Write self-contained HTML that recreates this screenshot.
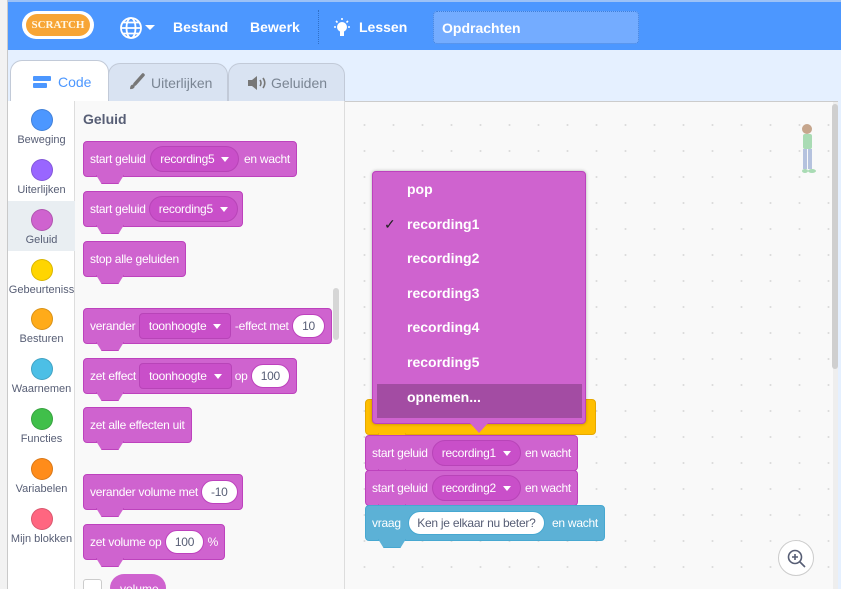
<!DOCTYPE html>
<html><head><meta charset="utf-8"><style>
*{box-sizing:border-box;margin:0;padding:0}
html,body{width:841px;height:589px;overflow:hidden}
body{position:relative;font-family:"Liberation Sans",sans-serif;background:#e5f0ff}
.abs{position:absolute}
#strip{left:0;top:0;width:8px;height:589px;background:#f2f2f2;border-right:1px solid #c9c9c9}
#hdr{left:8px;top:0;width:833px;height:50px;background:#4c97ff;border-top:2px solid #9cc2f7}
.nav{position:absolute;top:17px;color:#fff;font-weight:bold;font-size:14px}
.tab{position:absolute;top:63px;height:38px;border:1px solid #c2cad8;border-bottom:none;border-radius:12px 12px 0 0;background:#d9e3f2;color:#7a8593;font-size:14px;padding-top:11px}
#cats{left:8px;top:101px;width:67px;height:488px;background:#fff;border-right:1px solid #ddd}
.cat{position:absolute;left:0;width:67px;text-align:center;font-size:11px;color:#575e75;white-space:nowrap;overflow:hidden}
.cat i{display:block;width:22px;height:22px;border-radius:50%;margin:0 auto 3px;border:1px solid rgba(0,0,0,.15)}
#pal{left:75px;top:101px;width:270px;height:488px;background:#f9f9f9;border-right:1px solid #ddd}
#ws{left:345px;top:101px;width:493px;height:488px;background:#f9f9f9;background-image:radial-gradient(#dcdcdc 1px,transparent 1.2px);background-size:29px 26px;background-position:5px 10px;border-top:1px solid #ccc;overflow:hidden}
.blk{position:absolute;height:36px;background:#cf63cf;border:1px solid #bd42bd;border-radius:4px;display:flex;align-items:center;justify-content:space-between;padding:0 6px;color:#fff;font-size:12px;letter-spacing:-0.25px;white-space:nowrap;gap:3px}
.blk:after{content:"";position:absolute;left:12px;bottom:-8px;width:26px;height:8px;background:inherit;border:1px solid;border-color:inherit;border-top:none;border-radius:0 0 4px 4px;clip-path:polygon(0 0,100% 0,80% 100%,20% 100%)}
.dd{background:#c94fc9;border-radius:14px;height:26px;padding:0 9px;display:flex;align-items:center;border:1px solid #b844b8}
.dd:after{content:"";border:4px solid transparent;border-top:5px solid #fff;margin:5px 0 0 7px}
.sq{border-radius:4px}
.num{background:#fff;color:#575e75;border-radius:13px;height:24px;padding:0 9px;display:flex;align-items:center;border:1px solid #bd42bd}
.menu{left:372px;top:171px;width:214px;height:253px;background:#cf63cf;border:1px solid #bd42bd;border-radius:4px;box-shadow:0 0 3px rgba(0,0,0,.3)}
.mi{position:absolute;left:34px;color:#fff;font-weight:bold;font-size:14px}
</style></head><body>
<div id="strip" class="abs"></div>
<div id="hdr" class="abs">
 <div class="abs" style="left:14px;top:9px;width:72px;height:28px;background:#fff;border-radius:14px"></div>
 <div class="abs" style="left:18px;top:12px;width:64px;height:22px;background:#f7a535;border-radius:11px;color:#fff8e8;font-weight:bold;font-size:11px;text-align:center;line-height:22px;font-family:'Liberation Serif',serif">SCRATCH</div>
 <svg class="abs" style="left:111px;top:14px" width="24" height="24" viewBox="0 0 24 24" fill="none" stroke="#fff" stroke-width="1.8"><circle cx="12" cy="12" r="10"/><ellipse cx="12" cy="12" rx="4.5" ry="10"/><path d="M2 12h20M4 6.5h16M4 17.5h16"/></svg>
 <div class="abs" style="left:137px;top:23px;border:5px solid transparent;border-top:5px solid #fff"></div>
 <div class="nav" style="left:165px">Bestand</div>
 <div class="nav" style="left:242px">Bewerk</div>
 <div class="abs" style="left:310px;top:8px;height:34px;border-left:1px dotted #2f6fc7"></div>
 <svg class="abs" style="left:324px;top:15px" width="20" height="22" viewBox="0 0 20 22"><circle cx="10" cy="10" r="5" fill="#fff"/><rect x="8" y="14" width="4" height="5" fill="#fff"/><path d="M10 1v2M2 10h2M16 10h2M4 4l1.5 1.5M16 4l-1.5 1.5" stroke="#fff" stroke-width="1.6"/></svg>
 <div class="nav" style="left:351px">Lessen</div>
 <div class="abs" style="left:425px;top:9px;width:206px;height:33px;background:#74acff;border:1px dotted #3d7fdc;border-radius:4px;color:#fff;font-weight:bold;font-size:14px;padding:8px 8px">Opdrachten</div>
</div>
<div class="tab" style="left:228px;width:117px;padding-left:42px">Geluiden</div>
<svg class="abs" style="left:247px;top:75px" width="20" height="16"><path d="M1 5h4l5-4v14l-5-4H1z" fill="#777"/><path d="M13 5q2 3 0 6M16 3q3.5 5 0 10" stroke="#777" stroke-width="1.6" fill="none"/></svg>
<div class="tab" style="left:108px;width:120px;padding-left:42px">Uiterlijken</div>
<svg class="abs" style="left:127px;top:73px" width="18" height="18"><path d="M16 2L8 11" stroke="#777" stroke-width="3.5" stroke-linecap="round"/><path d="M3 16q0-5 4-4.5q1.5 1.5 0 3.5q-2 1.5-4 1" fill="#777"/></svg>
<div class="tab" style="left:10px;width:99px;background:#fff;color:#4c97ff;top:60px;height:42px;border-color:#c2cad8;padding-top:13px;padding-left:47px">Code</div>
<svg class="abs" style="left:33px;top:76px" width="18" height="12"><rect x="0" y="0" width="18" height="5" rx="1" fill="#4c97ff"/><rect x="0" y="7" width="14" height="5" rx="1" fill="#4c97ff"/></svg>

<div id="cats" class="abs">
 <div class="abs" style="left:0;top:100px;width:67px;height:50px;background:#e9eef2"></div>
 <div class="cat" style="top:8px"><i style="background:#4c97ff"></i>Beweging</div>
 <div class="cat" style="top:58px"><i style="background:#9966ff"></i>Uiterlijken</div>
 <div class="cat" style="top:108px"><i style="background:#cf63cf"></i>Geluid</div>
 <div class="cat" style="top:158px"><i style="background:#ffd500"></i>Gebeurteniss</div>
 <div class="cat" style="top:207px"><i style="background:#ffab19"></i>Besturen</div>
 <div class="cat" style="top:257px"><i style="background:#4cbfe6"></i>Waarnemen</div>
 <div class="cat" style="top:307px"><i style="background:#40bf4a"></i>Functies</div>
 <div class="cat" style="top:357px"><i style="background:#ff8c1a"></i>Variabelen</div>
 <div class="cat" style="top:407px"><i style="background:#ff6680"></i>Mijn blokken</div>
</div>
<div id="pal" class="abs">
 <div class="abs" style="left:8px;top:10px;font-weight:bold;font-size:14px;color:#575e75">Geluid</div>
 <div class="abs" style="left:258px;top:187px;width:6px;height:52px;background:#d6d6d6;border-radius:3px"></div>
</div>
<div class="blk" style="left:83px;top:141px;width:214px">start geluid <span class="dd">recording5</span> en wacht</div>
<div class="blk" style="left:83px;top:191px;width:160px">start geluid <span class="dd">recording5</span></div>
<div class="blk" style="left:83px;top:241px;width:103px">stop alle geluiden</div>
<div class="blk" style="left:83px;top:308px;width:249px">verander <span class="dd sq">toonhoogte</span> -effect met <span class="num">10</span></div>
<div class="blk" style="left:83px;top:358px;width:214px">zet effect <span class="dd sq">toonhoogte</span> op <span class="num">100</span></div>
<div class="blk" style="left:83px;top:407px;width:109px">zet alle effecten uit</div>
<div class="blk" style="left:83px;top:474px;width:160px">verander volume met <span class="num">-10</span></div>
<div class="blk" style="left:83px;top:524px;width:142px">zet volume op <span class="num">100</span> %</div>
<div class="abs" style="left:83px;top:579px;width:19px;height:19px;background:#fff;border:1px solid #ccc;border-radius:3px"></div>
<div class="abs" style="left:110px;top:574px;width:56px;height:28px;background:#cf63cf;border-radius:14px;color:#fff;font-size:12px;padding:8px 10px">volume</div>

<div id="ws" class="abs">
 <div class="abs" style="left:488px;top:0;width:5px;height:488px;background:#eee"></div>
 <div class="abs" style="left:487px;top:2px;width:6px;height:265px;background:#cfcfcf;border-radius:3px"></div>
 <svg class="abs" style="left:453px;top:20px" width="20" height="52" opacity=".75"><circle cx="9" cy="7" r="5" fill="#b58b6a"/><rect x="5" y="12" width="9" height="15" rx="2" fill="#8fd19e"/><path d="M7 27v20M12 27v20" stroke="#9fb0d5" stroke-width="4"/><ellipse cx="7" cy="49" rx="3" ry="2" fill="#8fd19e"/><ellipse cx="14" cy="49" rx="4" ry="2" fill="#8fd19e"/></svg>
 <div class="abs" style="left:433px;top:438px;width:36px;height:36px;border-radius:50%;background:#fff;border:1px solid #ccc"></div>
 <svg class="abs" style="left:441px;top:446px" width="22" height="22" fill="none" stroke="#575e75" stroke-width="1.6"><circle cx="9" cy="9" r="6.5"/><path d="M14 14l5 5M9 6v6M6 9h6"/></svg>
</div>
<div class="blk" style="left:365px;top:399px;width:231px;background:#ffbf00;border-color:#e6a800"></div>
<div class="blk" style="left:365px;top:435px;width:213px">start geluid <span class="dd">recording1</span> en wacht</div>
<div class="blk" style="left:365px;top:470px;width:213px">start geluid <span class="dd">recording2</span> en wacht</div>
<div class="blk" style="left:365px;top:505px;width:240px;background:#5cb1d6;border-color:#47a8d1">vraag <span class="num" style="border-color:#47a8d1;padding:0 8px">Ken je elkaar nu beter?</span> en wacht</div>

<div class="abs menu">
 <div class="mi" style="top:9px">pop</div>
 <div class="mi" style="top:44px;left:11px;color:#222;font-weight:normal">&#10003;</div>
 <div class="mi" style="top:44px">recording1</div>
 <div class="mi" style="top:78px">recording2</div>
 <div class="mi" style="top:113px">recording3</div>
 <div class="mi" style="top:147px">recording4</div>
 <div class="mi" style="top:182px">recording5</div>
 <div class="abs" style="left:4px;top:212px;width:205px;height:34px;background:#a34ca3"></div>
 <div class="mi" style="top:217px">opnemen...</div>
</div>
<div class="abs" style="left:470px;top:423px;border:9px solid transparent;border-top:10px solid #cf63cf"></div>
</body></html>
